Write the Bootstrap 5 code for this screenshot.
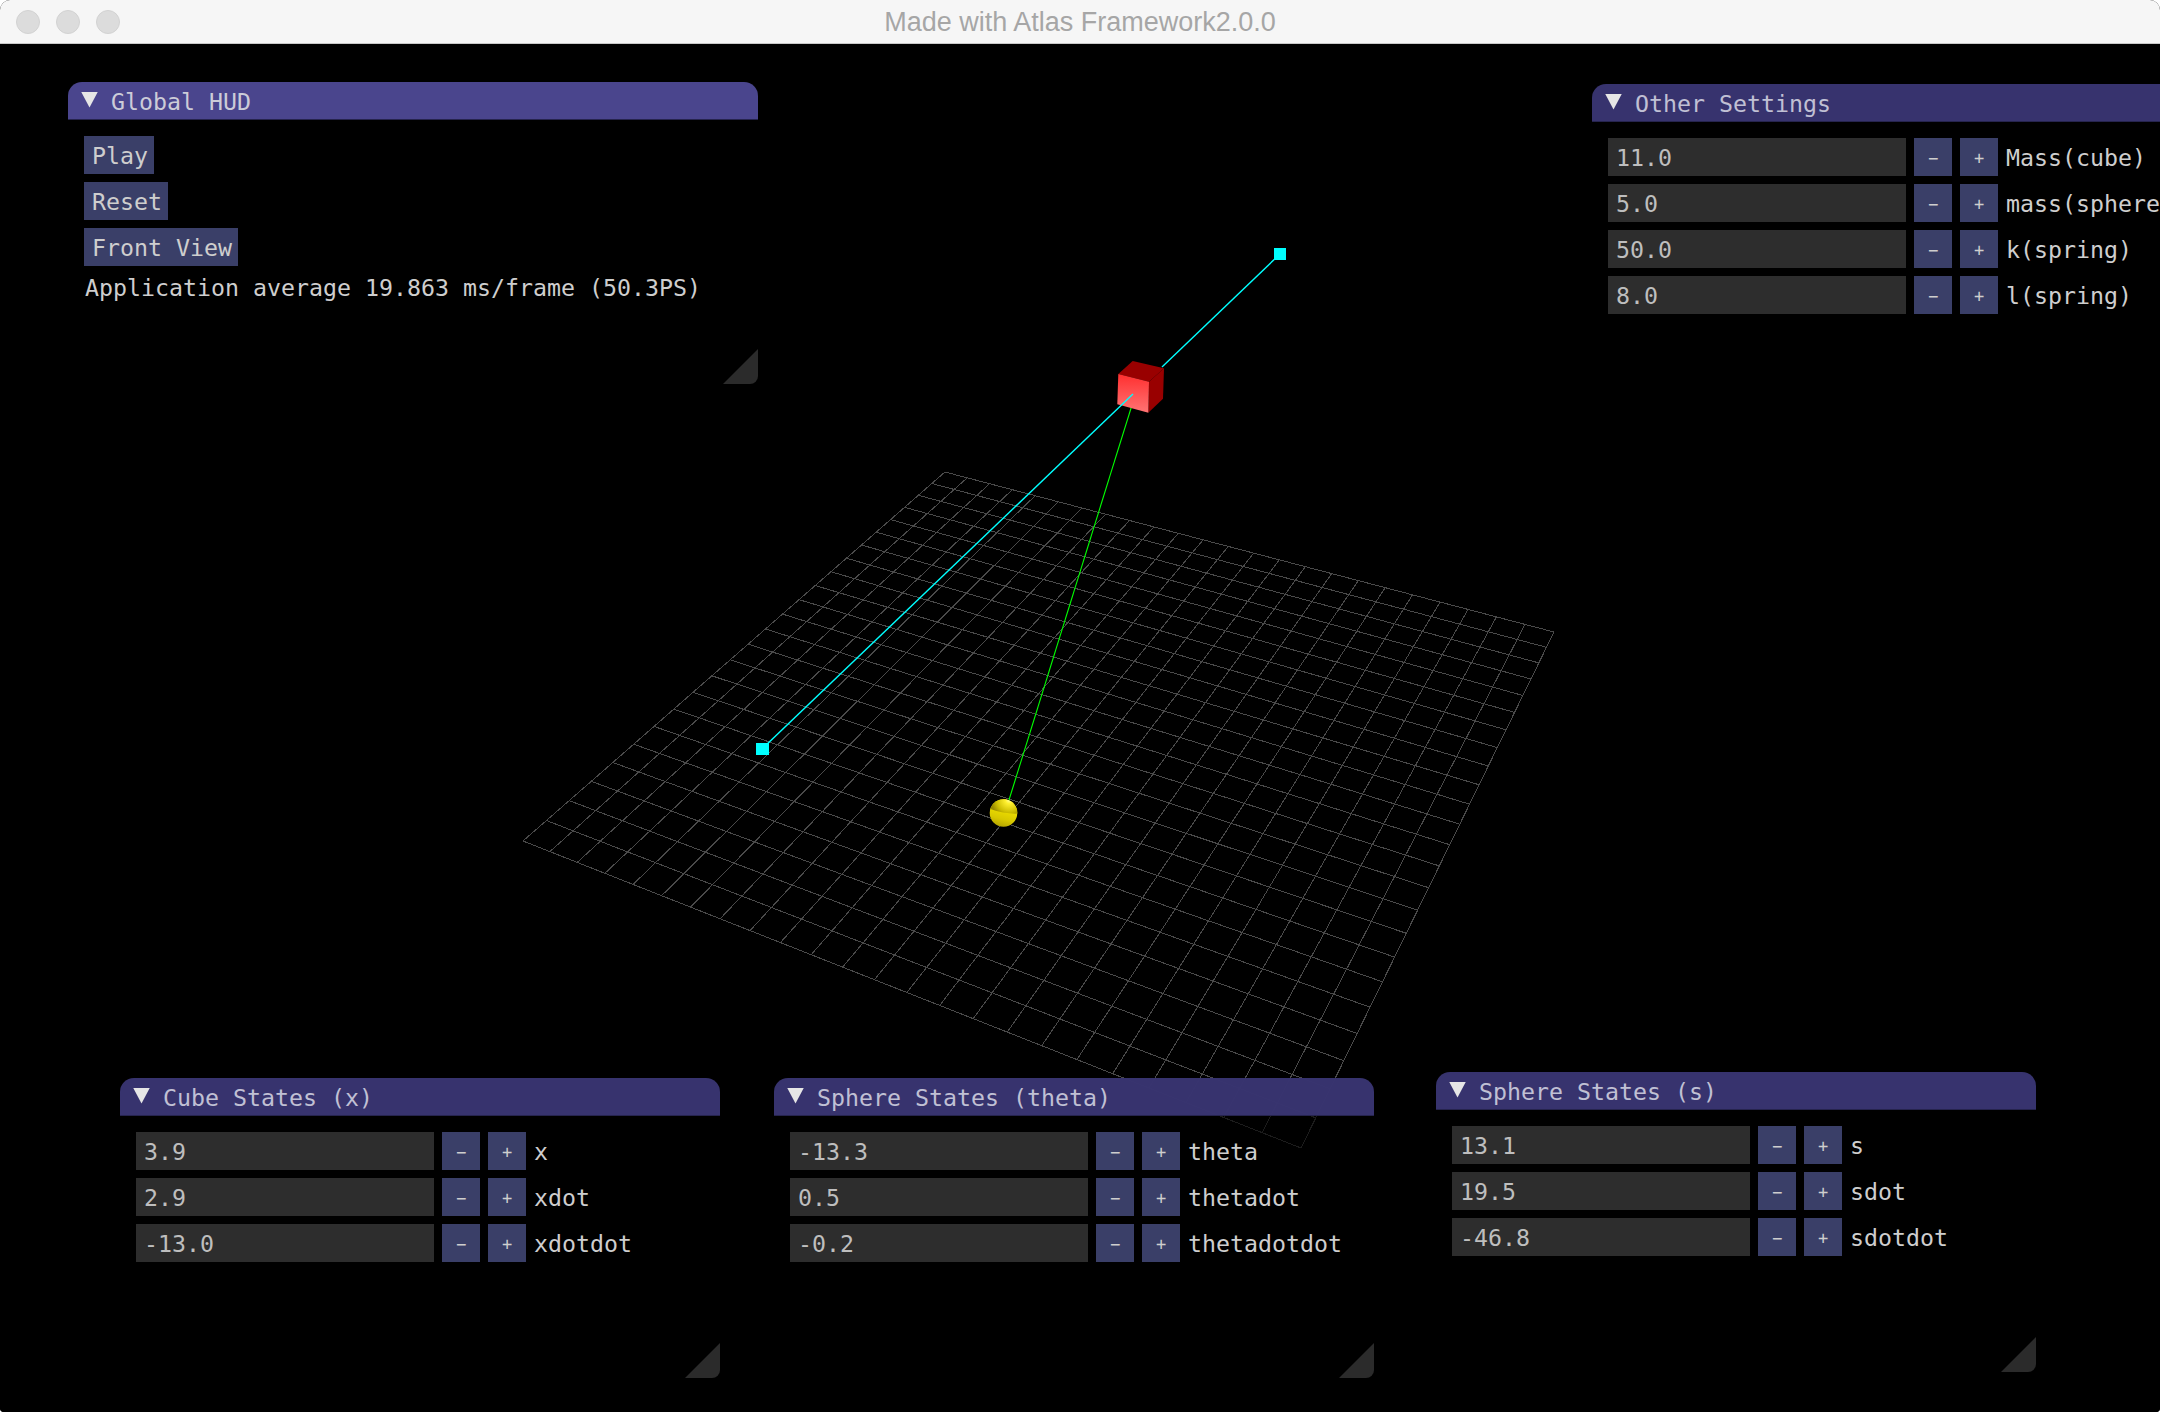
<!DOCTYPE html>
<html lang="en">
<head>
<meta charset="utf-8">
<title>Made with Atlas Framework2.0.0</title>
<link href="https://cdn.jsdelivr.net/npm/bootstrap@5.3.0/dist/css/bootstrap.min.css" rel="stylesheet">
<script src="https://cdn.jsdelivr.net/npm/bootstrap@5.3.0/dist/js/bootstrap.bundle.min.js"></script>
<style>
html, body { height: 100%; background: #fff; overflow: hidden; }
.app-frame { height: 1412px; border-radius: 10px 10px 4px 4px; overflow: hidden; background: #000; }
.app-titlebar { height: 44px; background: #f6f6f6; border-bottom: 1px solid #c9c9c9; position: relative; flex: none; }
.light { width: 24px; height: 24px; border-radius: 50%; background: #dcdcdc; border: 1px solid #d2d2d2; }
.lights { gap: 16px; padding-left: 16px; }
.app-title { font: 27px/45px "Liberation Sans", Arial, sans-serif; color: #a6a6a6; }
.viewport3d { position: relative; flex: 1 1 auto; background: #000; overflow: hidden; }
.scene { position: absolute; left: 0; top: -44px; width: 2160px; height: 1412px; }
.hud {
  position: absolute; width: 600px; height: 300px; border: 0; border-radius: 14px 14px 8px 8px;
  background: rgba(0,0,0,.62); font: 23.25px/28px "DejaVu Sans Mono", monospace; color: #cecece;
}
.hud.wide { width: 690px; height: 302px; }
.pos-hud { left: 68px; top: 38px; }
.pos-other { left: 1592px; top: 40px; }
.pos-cube { left: 120px; top: 1034px; }
.pos-theta { left: 774px; top: 1034px; }
.pos-s { left: 1436px; top: 1028px; }
.hud .card-header {
  height: 38px; padding: 2px 0 0 13px; border: 0; border-bottom: 1px solid #26244e;
  border-radius: 14px 14px 0 0; background: rgba(58,54,117,.94); color: #c0c0d4;
  gap: 13px; white-space: pre;
}
.hud.focused .card-header { background: #4a458d; color: #ccccd8; }
.caret-down { width: 17px; height: 16px; background: #e6e6e6; clip-path: polygon(0 0, 100% 0, 50% 100%); margin-top: -4px; }
.hud .card-body { padding: 16px; gap: 8px; }
.hud-btn {
  height: 38px; padding: 2px 6px 0 8px; border: 0; border-radius: 0; background: #3a3f68; color: #cecece;
  font: inherit; line-height: 36px;
}
.hud-btn:hover, .hud-btn:active { background: #3a3f68; color: #cecece; }
.step-btn { width: 38px; padding: 2px 0 0; font-size: 17px; }
.value-box { width: 298px; height: 38px; padding: 2px 0 0 8px; background: #2d2d2d; color: #bebebe; line-height: 36px; }
.field-label { padding-top: 2px; white-space: nowrap; }
.hud-row { height: 38px; gap: 8px; }
.hud-line { padding-left: 1px; }
.grip {
  position: absolute; right: 0; bottom: 0; width: 35px; height: 35px; background: #2b2b2b;
  clip-path: polygon(100% 0, 100% 100%, 0 100%); border-bottom-right-radius: 8px;
}
.app-title-text { position: absolute; left: 0; right: 0; top: 0; text-align: center; }
</style>
</head>
<body>
<div class="app-frame d-flex flex-column">
  <div class="app-titlebar d-flex align-items-center">
    <div class="lights d-flex"><span class="light"></span><span class="light"></span><span class="light"></span></div>
    <div class="app-title app-title-text">Made with Atlas Framework2.0.0</div>
  </div>
  <div class="viewport3d">
    <svg class="scene" viewBox="0 0 2160 1412" xmlns="http://www.w3.org/2000/svg">
      <defs>
        <linearGradient id="cubeFront" x1="0" y1="0" x2="0" y2="1">
          <stop offset="0" stop-color="#ff2f2f"/><stop offset="1" stop-color="#ff7474"/>
        </linearGradient>
        <radialGradient id="ballTop" gradientUnits="userSpaceOnUse" cx="1009" cy="800" r="18">
          <stop offset="0" stop-color="#ffffa0"/><stop offset=".2" stop-color="#fff030"/><stop offset=".7" stop-color="#ccbc00"/><stop offset="1" stop-color="#988800"/>
        </radialGradient>
        <linearGradient id="ballLow" gradientUnits="userSpaceOnUse" x1="1006" y1="808" x2="1001" y2="827">
          <stop offset="0" stop-color="#f0e000"/><stop offset=".6" stop-color="#d8c800"/><stop offset="1" stop-color="#b4a400"/>
        </linearGradient>
      </defs>
      <g id="floorGrid" stroke="#4a4a4a" stroke-width="1" fill="none" shape-rendering="crispEdges"></g>
      <line x1="1280" y1="254" x2="1162" y2="367" stroke="#00ffff" stroke-width="1.4"/>
      <line x1="1132" y1="405" x2="1009" y2="800" stroke="#00ff00" stroke-width="1.1"/>
      <circle cx="1003.5" cy="813" r="13.8" fill="url(#ballLow)"/>
      <path d="M990.3 809 A13.8 13.8 0 0 1 1017.3 813.6 Q1004 814 990.3 809 Z" fill="url(#ballTop)"/>
      <polygon points="1132.7,361 1164,368.3 1149,381.7 1118.3,374" fill="#990000"/>
      <polygon points="1164,368.3 1163,398.7 1148.3,412.7 1149,381.7" fill="#990000"/>
      <polygon points="1118.3,374 1149,381.7 1148.3,412.7 1117.3,404.3" fill="url(#cubeFront)"/>
      <line x1="1133" y1="394" x2="762" y2="749" stroke="#00ffff" stroke-width="1.4"/>
      <rect x="1274" y="248" width="12" height="12" fill="#00ffff"/>
      <rect x="756" y="743" width="13" height="12" fill="#00ffff"/>
    </svg>

    <section class="card hud wide focused pos-hud">
      <div class="card-header d-flex align-items-center"><span class="caret-down"></span><span>Global HUD</span></div>
      <div class="card-body d-flex flex-column align-items-start">
        <button class="btn hud-btn">Play</button>
        <button class="btn hud-btn">Reset</button>
        <button class="btn hud-btn">Front View</button>
        <div class="hud-line">Application average 19.863 ms/frame (50.3PS)</div>
      </div>
      <span class="grip"></span>
    </section>

    <section class="card hud pos-other">
      <div class="card-header d-flex align-items-center"><span class="caret-down"></span><span>Other Settings</span></div>
      <div class="card-body d-flex flex-column">
        <div class="hud-row d-flex align-items-center"><div class="value-box">11.0</div><button class="btn hud-btn step-btn">−</button><button class="btn hud-btn step-btn">+</button><span class="field-label">Mass(cube)</span></div>
        <div class="hud-row d-flex align-items-center"><div class="value-box">5.0</div><button class="btn hud-btn step-btn">−</button><button class="btn hud-btn step-btn">+</button><span class="field-label">mass(sphere)</span></div>
        <div class="hud-row d-flex align-items-center"><div class="value-box">50.0</div><button class="btn hud-btn step-btn">−</button><button class="btn hud-btn step-btn">+</button><span class="field-label">k(spring)</span></div>
        <div class="hud-row d-flex align-items-center"><div class="value-box">8.0</div><button class="btn hud-btn step-btn">−</button><button class="btn hud-btn step-btn">+</button><span class="field-label">l(spring)</span></div>
      </div>
    </section>

    <section class="card hud pos-cube">
      <div class="card-header d-flex align-items-center"><span class="caret-down"></span><span>Cube States (x)</span></div>
      <div class="card-body d-flex flex-column">
        <div class="hud-row d-flex align-items-center"><div class="value-box">3.9</div><button class="btn hud-btn step-btn">−</button><button class="btn hud-btn step-btn">+</button><span class="field-label">x</span></div>
        <div class="hud-row d-flex align-items-center"><div class="value-box">2.9</div><button class="btn hud-btn step-btn">−</button><button class="btn hud-btn step-btn">+</button><span class="field-label">xdot</span></div>
        <div class="hud-row d-flex align-items-center"><div class="value-box">-13.0</div><button class="btn hud-btn step-btn">−</button><button class="btn hud-btn step-btn">+</button><span class="field-label">xdotdot</span></div>
      </div>
      <span class="grip"></span>
    </section>

    <section class="card hud pos-theta">
      <div class="card-header d-flex align-items-center"><span class="caret-down"></span><span>Sphere States (theta)</span></div>
      <div class="card-body d-flex flex-column">
        <div class="hud-row d-flex align-items-center"><div class="value-box">-13.3</div><button class="btn hud-btn step-btn">−</button><button class="btn hud-btn step-btn">+</button><span class="field-label">theta</span></div>
        <div class="hud-row d-flex align-items-center"><div class="value-box">0.5</div><button class="btn hud-btn step-btn">−</button><button class="btn hud-btn step-btn">+</button><span class="field-label">thetadot</span></div>
        <div class="hud-row d-flex align-items-center"><div class="value-box">-0.2</div><button class="btn hud-btn step-btn">−</button><button class="btn hud-btn step-btn">+</button><span class="field-label">thetadotdot</span></div>
      </div>
      <span class="grip"></span>
    </section>

    <section class="card hud pos-s">
      <div class="card-header d-flex align-items-center"><span class="caret-down"></span><span>Sphere States (s)</span></div>
      <div class="card-body d-flex flex-column">
        <div class="hud-row d-flex align-items-center"><div class="value-box">13.1</div><button class="btn hud-btn step-btn">−</button><button class="btn hud-btn step-btn">+</button><span class="field-label">s</span></div>
        <div class="hud-row d-flex align-items-center"><div class="value-box">19.5</div><button class="btn hud-btn step-btn">−</button><button class="btn hud-btn step-btn">+</button><span class="field-label">sdot</span></div>
        <div class="hud-row d-flex align-items-center"><div class="value-box">-46.8</div><button class="btn hud-btn step-btn">−</button><button class="btn hud-btn step-btn">+</button><span class="field-label">sdotdot</span></div>
      </div>
      <span class="grip"></span>
    </section>
  </div>
</div>
<script>
(function () {
  var N = 24;
  var x0=945,y0=472,x1=1554,y1=632,x2=1301,y2=1148,x3=523,y3=841;
  var dx1=x1-x2,dx2=x3-x2,sx=x0-x1+x2-x3,dy1=y1-y2,dy2=y3-y2,sy=y0-y1+y2-y3;
  var den=dx1*dy2-dx2*dy1;
  var g=(sx*dy2-dx2*sy)/den,h=(dx1*sy-sx*dy1)/den;
  var a=x1-x0+g*x1,b=x3-x0+h*x3,c=x0,d=y1-y0+g*y1,e=y3-y0+h*y3,f=y0;
  function P(u,v){var w=g*u+h*v+1;return [(a*u+b*v+c)/w,(d*u+e*v+f)/w];}
  var out='';
  function seg(p,q){out+='<line x1="'+p[0].toFixed(1)+'" y1="'+p[1].toFixed(1)+'" x2="'+q[0].toFixed(1)+'" y2="'+q[1].toFixed(1)+'"/>';}
  for(var i=0;i<=N;i++){seg(P(i/N,0),P(i/N,1));seg(P(0,i/N),P(1,i/N));}
  document.getElementById('floorGrid').innerHTML=out;
})();
</script>
</body>
</html>
